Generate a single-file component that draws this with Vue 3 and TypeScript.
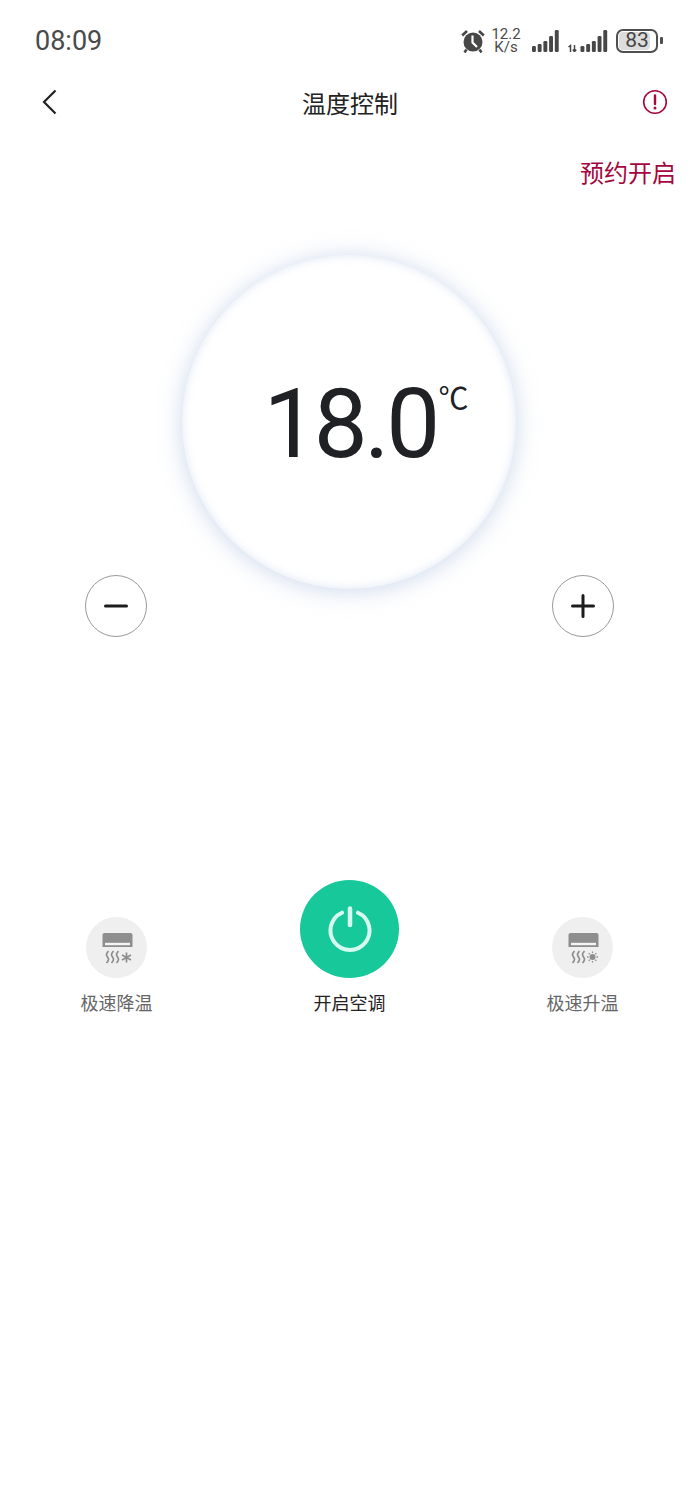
<script setup lang="ts">
interface Bar { x: number; y: number; h: number }
const signalA: Bar[] = [
  { x: 0, y: 16, h: 6 }, { x: 5.7, y: 14, h: 8 }, { x: 11.4, y: 11, h: 11 }, { x: 17.1, y: 6, h: 16 }, { x: 22.8, y: 0, h: 22 },
]
const signalB: Bar[] = signalA.map((b) => ({ ...b, x: b.x + 12.5 }))
</script>

<template>
  <div class="page">
    <header class="status">
      <span class="time">08:09</span>
      <div class="status-right">
        <svg class="alarm" width="24" height="24" viewBox="0 0 24 24">
          <circle cx="12" cy="13" r="9.500" fill="#474747" />
          <path d="M11.500 6.500V13.500L16 18" fill="none" stroke="#fff" stroke-width="2.200" />
          <path d="M1.200 6.500L6 2M22.800 6.500L18 2M5.500 20.500L3.500 23.500M18.500 20.500L20.500 23.500" fill="none" stroke="#474747" stroke-width="2.600" />
        </svg>
        <div class="speed">12.2 K/s</div>
        <svg class="sig-a" width="27" height="22" viewBox="0 0 27 22">
          <rect v-for="b in signalA" :key="b.x" :x="b.x" :y="b.y" width="3.900" :height="b.h" rx="1.300" fill="#474747" />
        </svg>
        <svg class="sig-b" width="40" height="22" viewBox="0 0 40 22">
          <path d="M0.500 17L2.500 15.500V22M6.500 15V21.500M4.800 19.500L6.500 21.800L8.200 19.500" fill="none" stroke="#474747" stroke-width="1.500" />
          <rect v-for="b in signalB" :key="b.x" :x="b.x" :y="b.y" width="3.900" :height="b.h" rx="1.300" fill="#474747" />
        </svg>
        <div class="battery">
          <div class="battery-body"><span class="battery-fill"></span><span class="battery-num">83</span></div>
          <span class="battery-nub"></span>
        </div>
      </div>
    </header>

    <nav class="nav">
      <svg class="back" width="16" height="26" viewBox="0 0 16 26">
        <path d="M13.500 1.500L2 13L13.500 24.500" fill="none" stroke="#222" stroke-width="2.200" />
      </svg>
      <h1 class="title">温度控制</h1>
      <svg class="info" width="26" height="26" viewBox="0 0 26 26">
        <circle cx="13" cy="13" r="11.300" fill="none" stroke="#a5093f" stroke-width="1.600" />
        <path d="M13 6.500V15" stroke="#a5093f" stroke-width="2.400" stroke-linecap="round" />
        <circle cx="13" cy="19" r="1.500" fill="#a5093f" />
      </svg>
    </nav>

    <div class="reserve">预约开启</div>

    <section class="dial-wrap">
      <div class="dial">
        <div class="temp"><span class="temp-num">18.0</span><span class="temp-unit">℃</span></div>
      </div>
    </section>

    <div class="steppers">
      <div class="stepper">
        <svg width="24" height="24" viewBox="0 0 24 24"><path d="M1.500 12H22.500" stroke="#1c1c1c" stroke-width="3" stroke-linecap="round" /></svg>
      </div>
      <div class="stepper">
        <svg width="24" height="24" viewBox="0 0 24 24"><path d="M1.500 12H22.500M12 1.500V22.500" stroke="#1c1c1c" stroke-width="3" stroke-linecap="round" /></svg>
      </div>
    </div>

    <div class="actions">
      <div class="action">
        <div class="round">
          <svg width="34" height="34" viewBox="0 0 34 34">
            <path d="M2.500 4Q2.500 2 4.500 2H30.500Q32.500 2 32.500 4V16H2.500Z" fill="#8e8e8e" />
            <path d="M5 13H30" stroke="#f4f4f4" stroke-width="2.400" />
            <path d="M8.500 20C6 23 6 24 7.500 26S9 29 6.500 32M13.500 20C11 23 11 24 12.500 26S14 29 11.500 32M18.500 20C16 23 16 24 17.500 26S19 29 16.500 32" fill="none" stroke="#8e8e8e" stroke-width="1.700" />
            <path d="M26.500 21.500V31.500M22 24L31 29M31 24L22 29" stroke="#8e8e8e" stroke-width="1.700" />
          </svg>
        </div>
        <span class="label">极速降温</span>
      </div>
      <div class="action">
        <div class="power">
          <svg width="44" height="46" viewBox="0 0 44 46">
            <path d="M14 6.700A19.500 19.500 0 1 0 30 6.700" fill="none" stroke="#d8fbf0" stroke-width="4" stroke-linecap="round" />
            <path d="M22 2.500V19" stroke="#d8fbf0" stroke-width="4.500" stroke-linecap="round" />
          </svg>
        </div>
        <span class="label label-on">开启空调</span>
      </div>
      <div class="action">
        <div class="round">
          <svg width="34" height="34" viewBox="0 0 34 34">
            <path d="M2.500 4Q2.500 2 4.500 2H30.500Q32.500 2 32.500 4V16H2.500Z" fill="#8e8e8e" />
            <path d="M5 13H30" stroke="#f4f4f4" stroke-width="2.400" />
            <path d="M8.500 20C6 23 6 24 7.500 26S9 29 6.500 32M13.500 20C11 23 11 24 12.500 26S14 29 11.500 32M18.500 20C16 23 16 24 17.500 26S19 29 16.500 32" fill="none" stroke="#8e8e8e" stroke-width="1.700" />
            <circle cx="26.500" cy="26" r="3" fill="#8e8e8e" />
            <path d="M26.500 20.500V22M26.500 30V31.500M21 26H22.500M30.500 26H32M22.700 22.200L23.700 23.200M29.300 28.800L30.300 29.800M30.300 22.200L29.300 23.200M23.700 28.800L22.700 29.800" stroke="#8e8e8e" stroke-width="1.300" />
          </svg>
        </div>
        <span class="label">极速升温</span>
      </div>
    </div>
  </div>
</template>

<style>
html, body { background: #fff; }
</style>

<style scoped>
.page {
  width: 700px;
  height: 1511px;
  background: #fff;
  overflow: hidden;
  font-family: "Noto Sans CJK SC", "Noto Sans", sans-serif;
}
.status {
  height: 80px;
  display: flex;
  align-items: center;
  justify-content: space-between;
  padding: 1px 37px 0 35px;
  box-sizing: border-box;
  color: #4a4a4a;
}
.time { font: 400 27px/32px Roboto, sans-serif; }
.status-right { display: flex; align-items: center; }
.alarm { margin-right: 6px; }
.speed {
  width: 30px;
  text-align: center;
  font: 400 15px/13px Roboto, sans-serif;
  margin-right: 11px;
}
.sig-a { margin-right: 9px; }
.sig-b { margin-right: 8px; }
.battery { display: flex; align-items: center; gap: 2px; }
.battery-body {
  position: relative;
  box-sizing: border-box;
  width: 42px;
  height: 24px;
  border: 2.500px solid #4f4f4f;
  border-radius: 7px;
  display: flex;
  align-items: center;
  justify-content: center;
}
.battery-fill {
  position: absolute;
  left: 1px;
  top: 1px;
  bottom: 1px;
  width: 31px;
  background: #dcdcdc;
  border-radius: 4px;
}
.battery-num { position: relative; font: 400 21px/19px Roboto, sans-serif; color: #444; }
.battery-nub { width: 3px; height: 7px; background: #4f4f4f; border-radius: 1px; }

.nav {
  height: 46px;
  display: flex;
  align-items: center;
  justify-content: space-between;
  padding: 0 32px 0 42px;
  position: relative;
}
.back { margin-top: -2px; }
.title {
  position: absolute;
  left: 0;
  right: 0;
  margin: 0;
  text-align: center;
  font-size: 24px;
  font-weight: 400;
  line-height: 44px;
  color: #222;
}
.info { margin-top: -2px; }
.reserve {
  margin-top: 28px;
  height: 36px;
  line-height: 36px;
  text-align: right;
  padding-right: 24px;
  font-size: 24px;
  color: #a5063f;
}
.dial-wrap {
  margin-top: 65px;
  display: flex;
  justify-content: center;
  padding-right: 2px;
}
.dial {
  width: 334px;
  height: 334px;
  border-radius: 50%;
  background: #fff;
  box-shadow: 0 2px 20px 3px rgba(178, 196, 226, 0.5), inset 0 0 8px 1px rgba(190, 206, 232, 0.4);
  display: flex;
  align-items: center;
  justify-content: center;
}
.temp { display: flex; align-items: flex-start; color: #202124; margin-left: 34px; margin-top: 4px; }
.temp-num { font: 400 96px/100px Roboto, sans-serif; letter-spacing: -3.500px; }
.temp-unit { font-size: 30px; line-height: 36px; margin-top: 4px; margin-left: 2px; }

.steppers {
  margin-top: -14px;
  display: flex;
  justify-content: space-between;
  padding: 0 86px 0 85px;
}
.stepper {
  box-sizing: border-box;
  width: 62px;
  height: 62px;
  border: 1px solid #9a9a9a;
  border-radius: 50%;
  display: flex;
  align-items: center;
  justify-content: center;
  background: #fff;
}
.actions {
  margin-top: 243px;
  display: flex;
  justify-content: space-between;
  align-items: flex-end;
  padding: 0 81px 0 80px;
}
.action { display: flex; flex-direction: column; align-items: center; width: 73px; }
.round {
  width: 61px;
  height: 61px;
  border-radius: 50%;
  background: #efefef;
  display: flex;
  align-items: center;
  justify-content: center;
}
.power {
  flex: none;
  width: 99px;
  height: 98px;
  border-radius: 50%;
  background: #16c89a;
  display: flex;
  align-items: center;
  justify-content: center;
}
.label {
  margin-top: 11px;
  font-size: 18px;
  line-height: 26px;
  color: #666;
  white-space: nowrap;
}
.label-on { color: #222; }
</style>
